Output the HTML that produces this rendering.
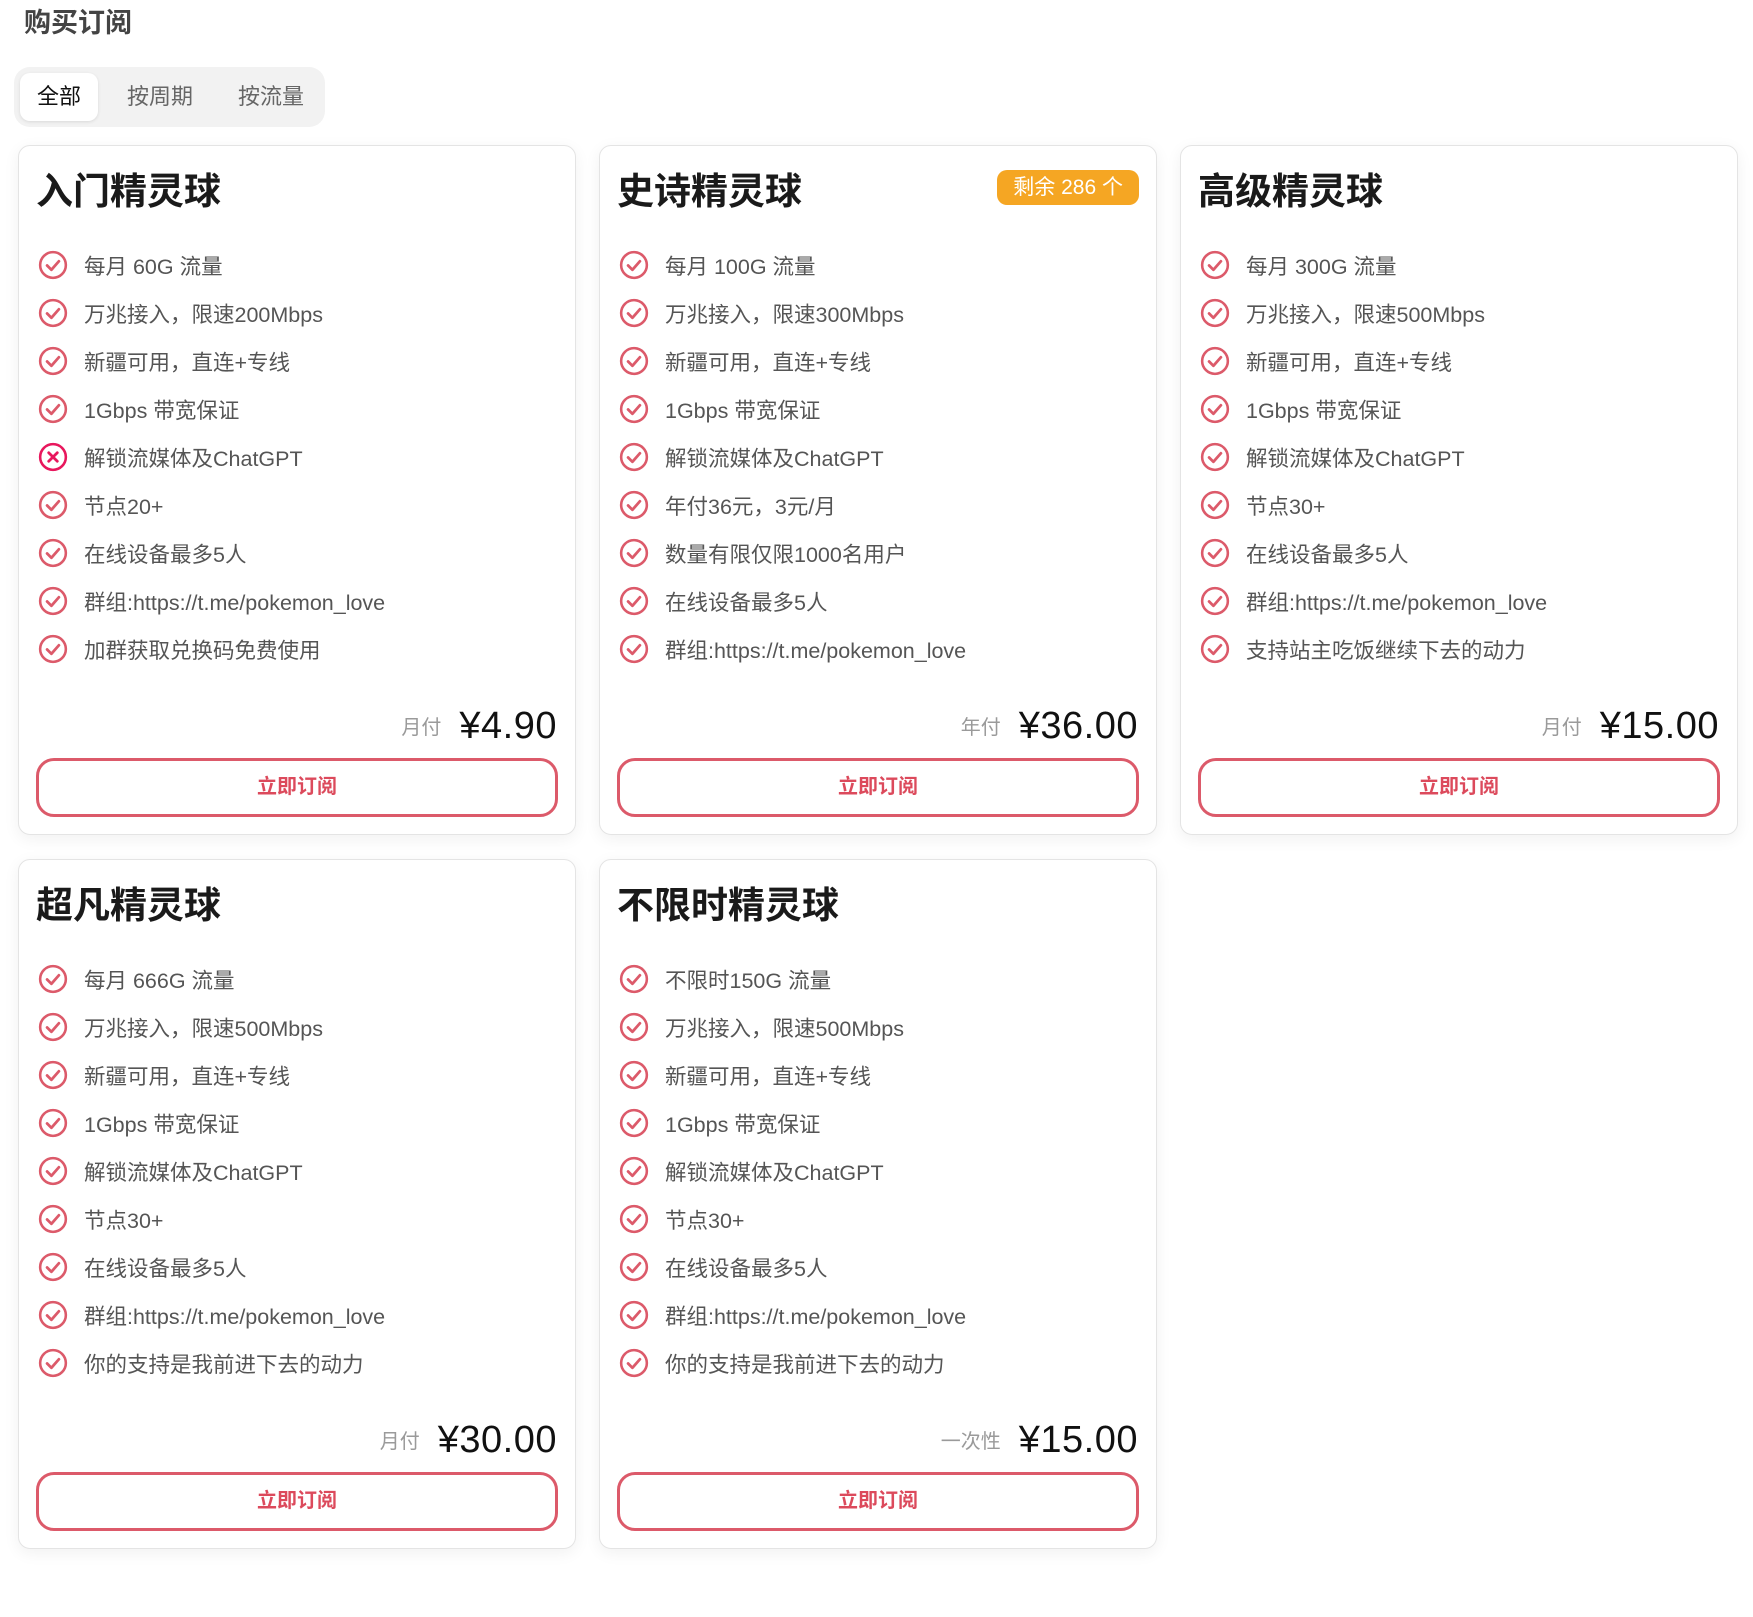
<!DOCTYPE html>
<html><head><meta charset="utf-8"><style>
*{box-sizing:border-box;margin:0;padding:0}
body{width:1753px;height:1617px;background:#fff;font-family:"Liberation Sans","Noto Sans CJK SC",sans-serif;position:relative;overflow:hidden}
h1{position:absolute;left:24px;top:1px;font-size:27px;font-weight:bold;color:#444}
.tabs{position:absolute;left:14px;top:67px;width:311px;height:60px;background:#f2f2f2;border-radius:16px}
.tab{position:absolute;top:0;line-height:60px;font-size:22px;color:#666}
.tab.act{left:6px;top:6px;width:78px;height:48px;line-height:48px;background:#fff;border-radius:10px;color:#111;text-align:center;box-shadow:0 1px 3px rgba(0,0,0,.1)}
.card{position:absolute;width:558px;height:690px;background:#fff;border:1px solid #e4e4e4;border-radius:12px;box-shadow:0 4px 16px rgba(0,0,0,.06)}
.card h2{position:absolute;left:17px;top:15px;font-size:37px;font-weight:bold;color:#1a1a1a}
.badge{position:absolute;right:17px;top:24px;height:35px;padding:0 16px;background:#f5a623;color:#fff;border-radius:10px;font-size:21px;line-height:35px}
ul{position:absolute;left:19px;top:95px;list-style:none}
li{height:48px;display:flex;align-items:center;font-size:21.5px;color:#555}
li svg{width:30px;height:30px;margin-right:16px;flex:none}
.price{position:absolute;right:18px;top:559px;display:flex;align-items:baseline}
.price span{font-size:20px;color:#9a9a9a;margin-right:18px;position:relative;top:-4px}
.price b{font-size:38px;font-weight:normal;color:#111;letter-spacing:.5px}
.btn{position:absolute;left:17px;right:17px;top:612px;height:59px;border:3px solid #dc5a6a;border-radius:18px;color:#dc4a5c;font-weight:bold;font-size:20px;text-align:center;line-height:53px}
</style></head><body>
<h1>购买订阅</h1>
<div class="tabs"><div class="tab act">全部</div><div class="tab" style="left:113px">按周期</div><div class="tab" style="left:224px">按流量</div></div>

<svg width="0" height="0" style="position:absolute"><defs>
<symbol id="ok" viewBox="0 0 28 28"><circle cx="14" cy="14" r="12" fill="none" stroke="#dc5a6a" stroke-width="2.4"/><path d="M8.5 14.5l4 4 7-8" fill="none" stroke="#dc5a6a" stroke-width="2.6" stroke-linecap="round" stroke-linejoin="round"/></symbol>
<symbol id="no" viewBox="0 0 28 28"><circle cx="14" cy="14" r="12" fill="none" stroke="#e8175d" stroke-width="2.4"/><path d="M10 10l8 8M18 10l-8 8" fill="none" stroke="#e8175d" stroke-width="2.6" stroke-linecap="round"/></symbol>
</defs></svg>

<div class="card" style="left:18px;top:145px"><h2>入门精灵球</h2><ul>
<li><svg><use href="#ok"/></svg>每月 60G 流量</li>
<li><svg><use href="#ok"/></svg>万兆接入，限速200Mbps</li>
<li><svg><use href="#ok"/></svg>新疆可用，直连+专线</li>
<li><svg><use href="#ok"/></svg>1Gbps 带宽保证</li>
<li><svg><use href="#no"/></svg>解锁流媒体及ChatGPT</li>
<li><svg><use href="#ok"/></svg>节点20+</li>
<li><svg><use href="#ok"/></svg>在线设备最多5人</li>
<li><svg><use href="#ok"/></svg>群组:https://t.me/pokemon_love</li>
<li><svg><use href="#ok"/></svg>加群获取兑换码免费使用</li>
</ul><div class="price"><span>月付</span><b>¥4.90</b></div><div class="btn">立即订阅</div></div>

<div class="card" style="left:599px;top:145px"><h2>史诗精灵球</h2><div class="badge">剩余 286 个</div><ul>
<li><svg><use href="#ok"/></svg>每月 100G 流量</li>
<li><svg><use href="#ok"/></svg>万兆接入，限速300Mbps</li>
<li><svg><use href="#ok"/></svg>新疆可用，直连+专线</li>
<li><svg><use href="#ok"/></svg>1Gbps 带宽保证</li>
<li><svg><use href="#ok"/></svg>解锁流媒体及ChatGPT</li>
<li><svg><use href="#ok"/></svg>年付36元，3元/月</li>
<li><svg><use href="#ok"/></svg>数量有限仅限1000名用户</li>
<li><svg><use href="#ok"/></svg>在线设备最多5人</li>
<li><svg><use href="#ok"/></svg>群组:https://t.me/pokemon_love</li>
</ul><div class="price"><span>年付</span><b>¥36.00</b></div><div class="btn">立即订阅</div></div>

<div class="card" style="left:1180px;top:145px"><h2>高级精灵球</h2><ul>
<li><svg><use href="#ok"/></svg>每月 300G 流量</li>
<li><svg><use href="#ok"/></svg>万兆接入，限速500Mbps</li>
<li><svg><use href="#ok"/></svg>新疆可用，直连+专线</li>
<li><svg><use href="#ok"/></svg>1Gbps 带宽保证</li>
<li><svg><use href="#ok"/></svg>解锁流媒体及ChatGPT</li>
<li><svg><use href="#ok"/></svg>节点30+</li>
<li><svg><use href="#ok"/></svg>在线设备最多5人</li>
<li><svg><use href="#ok"/></svg>群组:https://t.me/pokemon_love</li>
<li><svg><use href="#ok"/></svg>支持站主吃饭继续下去的动力</li>
</ul><div class="price"><span>月付</span><b>¥15.00</b></div><div class="btn">立即订阅</div></div>

<div class="card" style="left:18px;top:859px"><h2>超凡精灵球</h2><ul>
<li><svg><use href="#ok"/></svg>每月 666G 流量</li>
<li><svg><use href="#ok"/></svg>万兆接入，限速500Mbps</li>
<li><svg><use href="#ok"/></svg>新疆可用，直连+专线</li>
<li><svg><use href="#ok"/></svg>1Gbps 带宽保证</li>
<li><svg><use href="#ok"/></svg>解锁流媒体及ChatGPT</li>
<li><svg><use href="#ok"/></svg>节点30+</li>
<li><svg><use href="#ok"/></svg>在线设备最多5人</li>
<li><svg><use href="#ok"/></svg>群组:https://t.me/pokemon_love</li>
<li><svg><use href="#ok"/></svg>你的支持是我前进下去的动力</li>
</ul><div class="price"><span>月付</span><b>¥30.00</b></div><div class="btn">立即订阅</div></div>

<div class="card" style="left:599px;top:859px"><h2>不限时精灵球</h2><ul>
<li><svg><use href="#ok"/></svg>不限时150G 流量</li>
<li><svg><use href="#ok"/></svg>万兆接入，限速500Mbps</li>
<li><svg><use href="#ok"/></svg>新疆可用，直连+专线</li>
<li><svg><use href="#ok"/></svg>1Gbps 带宽保证</li>
<li><svg><use href="#ok"/></svg>解锁流媒体及ChatGPT</li>
<li><svg><use href="#ok"/></svg>节点30+</li>
<li><svg><use href="#ok"/></svg>在线设备最多5人</li>
<li><svg><use href="#ok"/></svg>群组:https://t.me/pokemon_love</li>
<li><svg><use href="#ok"/></svg>你的支持是我前进下去的动力</li>
</ul><div class="price"><span>一次性</span><b>¥15.00</b></div><div class="btn">立即订阅</div></div>
</body></html>
